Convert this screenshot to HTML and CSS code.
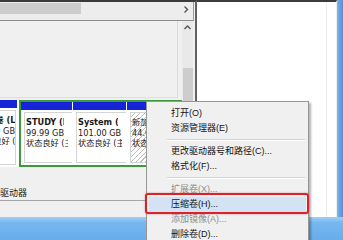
FILE: index.html
```html
<!DOCTYPE html>
<html lang="zh-CN">
<head>
    <meta charset="UTF-8">
    <meta name="viewport" content="width=device-width, initial-scale=1.0">
    <title>磁盘管理</title>
    <link rel="stylesheet" href="styles.css">
</head>
<body>
    <div class="screen">
        <div class="desk">
            <section class="console">
                <div class="hscroll">
                    <div class="hthumb"></div>
                    <svg class="chev-right" width="6" height="7" viewBox="0 0 6 7"><polyline points="1.5,0.5 4.5,3.5 1.5,6.5" fill="none" stroke="#555" stroke-width="1.4"/></svg>
                </div>
                <div class="console-body">
                    <div class="view">
                        <div class="upper"></div>
                        <div class="disk">
                            <div class="part part-edge">
                                <div class="bar"></div>
                                <div class="box">
                                    <b class="shift">新加卷 (L:)</b>
                                    <span>49.99 GB</span>
                                    <span>状态良好 (主分区)</span>
                                </div>
                            </div>
                            <div class="selection">
                                <div class="part part-study">
                                    <div class="bar"></div>
                                    <div class="box">
                                        <b>STUDY (D:)</b>
                                        <span>99.99 GB</span>
                                        <span>状态良好 (主分区)</span>
                                    </div>
                                </div>
                                <div class="part part-system">
                                    <div class="bar"></div>
                                    <div class="box">
                                        <b>System (C:)</b>
                                        <span>101.00 GB</span>
                                        <span>状态良好 (主分区)</span>
                                    </div>
                                </div>
                                <div class="part part-new">
                                    <div class="bar"></div>
                                    <div class="box hatched">
                                        <b class="cjk">新加卷 (E:)</b>
                                        <span>44.00 GB</span>
                                        <span>状态良好 (主分区)</span>
                                    </div>
                                </div>
                            </div>
                        </div>
                        <div class="drive-row"><span>驱动器</span></div>
                    </div>
                    <div class="vscroll">
                        <svg class="chev-up" width="7" height="5" viewBox="0 0 7 5"><polyline points="0.5,4 3.5,1 6.5,4" fill="none" stroke="#555" stroke-width="1.4"/></svg>
                        <div class="vthumb"></div>
                    </div>
                </div>
            </section>
            <section class="pane"></section>
            <div class="strip"></div>
        </div>
        <div class="taskbar"></div>

        <ul class="menu">
            <li>打开(O)</li>
            <li>资源管理器(E)</li>
            <li class="sep"></li>
            <li>更改驱动器号和路径(C)...</li>
            <li>格式化(F)...</li>
            <li class="sep"></li>
            <li class="off">扩展卷(X)...</li>
            <li class="hot">压缩卷(H)...</li>
            <li class="off">添加镜像(A)...</li>
            <li>删除卷(D)...</li>
        </ul>
        <div class="callout"></div>
    </div>
</body>
</html>
```

FILE: styles.css
```css
* {
    margin: 0;
    padding: 0;
    box-sizing: border-box;
}

body {
    font-family: "Liberation Sans", "Noto Sans CJK SC", sans-serif;
    background: #f0f0f0;
}

.screen {
    position: relative;
    width: 343px;
    height: 240px;
    overflow: hidden;
}

.desk {
    display: grid;
    grid-template-columns: 197px 140px 6px;
    height: 217px;
}

/* left window */
.console {
    display: flex;
    flex-direction: column;
    background: #f0f0f0;
    border-top: 2px solid #3b3b3b;
    border-right: 2px solid #626262;
}

.hscroll {
    display: flex;
    align-items: flex-start;
    justify-content: space-between;
    height: 19px;
    width: 194px;
    background: #ededed;
    border-bottom: 1px solid #8c8c8c;
    border-right: 1px solid #9a9a9a;
}

.hthumb {
    width: 81px;
    height: 11px;
    margin-top: 1px;
    background: #cdcdcd;
}

.chev-right {
    margin: 4px 4px 0 0;
}

.console-body {
    flex: 1;
    display: grid;
    grid-template-columns: 182px 11px 2px;
}

.view {
    display: flex;
    flex-direction: column;
}

.upper {
    height: 77px;
    margin: 0 4px 2px 0;
    border-right: 1px solid #dadada;
    border-bottom: 1px solid #dedede;
}

.disk {
    display: flex;
    height: 67px;
    background: #fff;
}

.part {
    display: flex;
    flex-direction: column;
    overflow: hidden;
}

.bar {
    height: 8px;
    background: #1424d6;
}

.box {
    flex: 1;
    display: flex;
    flex-direction: column;
    margin: 2px 0 2px 3px;
    padding: 4px 4px 0 1px;
    border: 1px solid #d4d4d4;
    border-right: none;
    font-family: "DejaVu Sans", "Noto Sans CJK SC", sans-serif;
    font-size: 8.2px;
    color: #1a1a1a;
    white-space: nowrap;
    overflow: hidden;
}

.box b,
.box span {
    display: block;
    height: 10.5px;
    line-height: 10.5px;
    overflow: hidden;
}

.box b {
    font-weight: 700;
    margin-right: 4px;
}

.part-edge {
    width: 50px;
    margin-left: -28px;
    margin-right: 2px;
}

.part-edge .box {
    margin-right: 1px;
    padding-right: 0;
    border-right: 1px solid #d4d4d4;
    direction: rtl;
    text-align: left;
}

.part-edge .box b,
.part-edge .box span {
    direction: ltr;
    unicode-bidi: embed;
    margin-right: 0;
}

.part-edge .shift {
    padding-left: 2px;
}

.selection {
    display: flex;
    gap: 1px;
    width: 163px;
    border: 2px solid #3c9a3a;
    border-right: none;
}

.part-study {
    width: 51px;
}

.part-system {
    width: 53px;
}

.part-new {
    flex: 1;
}

.hatched {
    background: repeating-linear-gradient(135deg, #fff 0, #fff 2.5px, #bdbdbd 2.5px, #bdbdbd 3.5px);
}

.hatched .cjk {
    font-weight: 400;
}

.drive-row {
    display: flex;
    align-items: center;
    height: 16px;
    margin-top: 18px;
    border-bottom: 1px solid #a6a6a6;
    font-size: 9px;
    color: #222;
}

.vscroll {
    display: flex;
    flex-direction: column;
    align-items: center;
    background: #e9e9e9;
}

.chev-up {
    margin-top: 4px;
}

.vthumb {
    width: 10px;
    height: 60px;
    margin-top: 38px;
    background: #cdcdcd;
}

/* right window */
.pane {
    background: #fff;
    border-top: 2px solid #3b3b3b;
    border-right: 1px solid #f0f0f0;
    box-shadow: inset -9px 0 0 #fff, inset -10px 0 0 #ececec;
}

.strip {
    background: linear-gradient(90deg, #7ab3ee, #4d8fe0);
}

.taskbar {
    height: 23px;
    background: linear-gradient(#a2cff5, #76b7ef 25%, #67acec);
}

/* context menu */
.menu {
    position: absolute;
    left: 146px;
    top: 101px;
    width: 163px;
    padding-top: 4px;
    list-style: none;
    background: #f0f0f0;
    border: 1px solid #979797;
    box-shadow: 2px 2px 2px rgba(0, 0, 0, 0.3);
    font-size: 9px;
    color: #141414;
}

.menu li {
    height: 15px;
    line-height: 15px;
    padding-left: 24px;
    white-space: nowrap;
}

.menu .sep {
    height: 8px;
    margin: 0 3px 0 20px;
    padding: 0;
    background: linear-gradient(#f0f0f0 3.5px, #d4d4d4 3.5px, #d4d4d4 4.5px, #fff 4.5px, #fff 5.5px, #f0f0f0 5.5px);
}

.menu .off {
    color: #8e8e8e;
}

.menu .hot {
    margin: 0 2px;
    padding-left: 22px;
    background: #d3e3f4;
}

.callout {
    position: absolute;
    left: 145px;
    top: 193px;
    width: 164px;
    height: 21px;
    border: 2px solid #d9232b;
    border-radius: 3px;
    box-shadow: 0 0 2px rgba(217, 35, 43, 0.5);
}
```
